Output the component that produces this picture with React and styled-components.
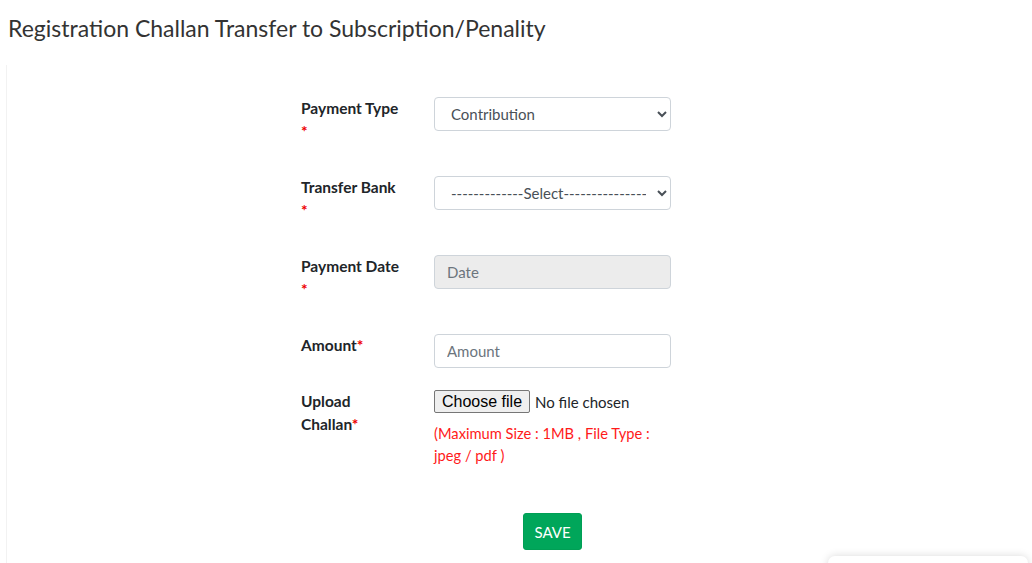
import React from "react";
import styled, { createGlobalStyle } from "styled-components";

const Global = createGlobalStyle`
  html, body { margin: 0; padding: 0; background: #fff; overflow: hidden; }
  body { font-family: Lato, "Open Sans", sans-serif; color: #212529; }
  * { box-sizing: border-box; }
`;

const Page = styled.div`
  padding: 0 0 0 7px;
  min-height: 563px;
`;

const Title = styled.h4`
  margin: 0;
  padding: 14px 0 0 1px;
  font-size: 23px;
  line-height: 29px;
  font-weight: 400;
  color: #333;
  height: 65px;
`;

const Card = styled.div`
  background: #fff;
  box-shadow: -1px 0 0 rgba(0, 0, 0, 0.05);
  padding: 32px 0 40px 294px;
  min-height: 500px;
`;

const Form = styled.form`
  display: grid;
  grid-template-columns: 133px 237px;
`;

const Label = styled.label`
  font-weight: 700;
  font-size: 15.5px;
  line-height: 23px;
  width: 102px;
  padding-bottom: 11px;
  margin-bottom: 22px;
  align-self: start;
`;

const Req = styled.span`
  color: #e00;
`;

const Field = styled.div`
  margin-bottom: 22px;
  align-self: start;
`;

const Select = styled.select`
  width: 237px;
  height: 34px;
  border: 1px solid #ced4da;
  border-radius: 4px;
  padding: 0 8px 0 12px;
  font-family: inherit;
  font-size: 15px;
  color: #495057;
  background: #fff;
`;

const Input = styled.input`
  width: 237px;
  height: 34px;
  border: 1px solid #ced4da;
  border-radius: 4px;
  padding: 0 12px;
  font-family: inherit;
  font-size: 15px;
  color: #495057;
  background: ${(p) => (p.disabled ? "#ececec" : "#fff")};
  &::placeholder { color: #6c757d; }
`;

const FileRow = styled.div`
  display: flex;
  align-items: center;
  gap: 5px;
  height: 23px;
`;

const FileButton = styled.span`
  display: inline-flex;
  align-items: center;
  height: 23px;
  padding: 0 7px;
  border: 1px solid #767676;
  border-radius: 2px;
  background: #efefef;
  font-family: "Liberation Sans", Arial, sans-serif;
  font-size: 16px;
  color: #000;
`;

const FileText = styled.span`
  font-size: 15px;
  color: #212529;
`;

const Hint = styled.div`
  margin-top: 9px;
  color: #ff1a1a;
  font-size: 14.7px;
  line-height: 22px;
`;

const Actions = styled.div`
  grid-column: 2;
  display: flex;
  justify-content: center;
  padding-top: 25px;
`;

const SaveButton = styled.button`
  width: 59px;
  height: 37px;
  border: 1px solid #009f55;
  border-radius: 3px;
  background: #00a65a;
  color: #fff;
  font-family: inherit;
  font-size: 15px;
  font-weight: 400;
`;

const Widget = styled.div`
  position: fixed;
  right: 4px;
  top: 556px;
  width: 200px;
  height: 40px;
  background: #fff;
  border-radius: 7px 7px 0 0;
  box-shadow: 0 0 8px rgba(0, 0, 0, 0.15);
`;

export default function App() {
  return (
    <>
      <Global />
      <Page>
        <Title>Registration Challan Transfer to Subscription/Penality</Title>
        <Card>
          <Form onSubmit={(e) => e.preventDefault()}>
            <Label>
              Payment Type <Req>*</Req>
            </Label>
            <Field>
              <Select defaultValue="c">
                <option value="c">Contribution</option>
              </Select>
            </Field>

            <Label>
              Transfer Bank <Req>*</Req>
            </Label>
            <Field>
              <Select defaultValue="">
                <option value="">-------------Select---------------</option>
              </Select>
            </Field>

            <Label>
              Payment Date <Req>*</Req>
            </Label>
            <Field>
              <Input placeholder="Date" disabled />
            </Field>

            <Label>
              Amount<Req>*</Req>
            </Label>
            <Field>
              <Input placeholder="Amount" />
            </Field>

            <Label>
              Upload Challan<Req>*</Req>
            </Label>
            <Field>
              <FileRow>
                <FileButton>Choose file</FileButton>
                <FileText>No file chosen</FileText>
              </FileRow>
              <Hint>(Maximum Size : 1MB , File Type : jpeg / pdf )</Hint>
            </Field>

            <Actions>
              <SaveButton type="submit">SAVE</SaveButton>
            </Actions>
          </Form>
        </Card>
        <Widget />
      </Page>
    </>
  );
}
